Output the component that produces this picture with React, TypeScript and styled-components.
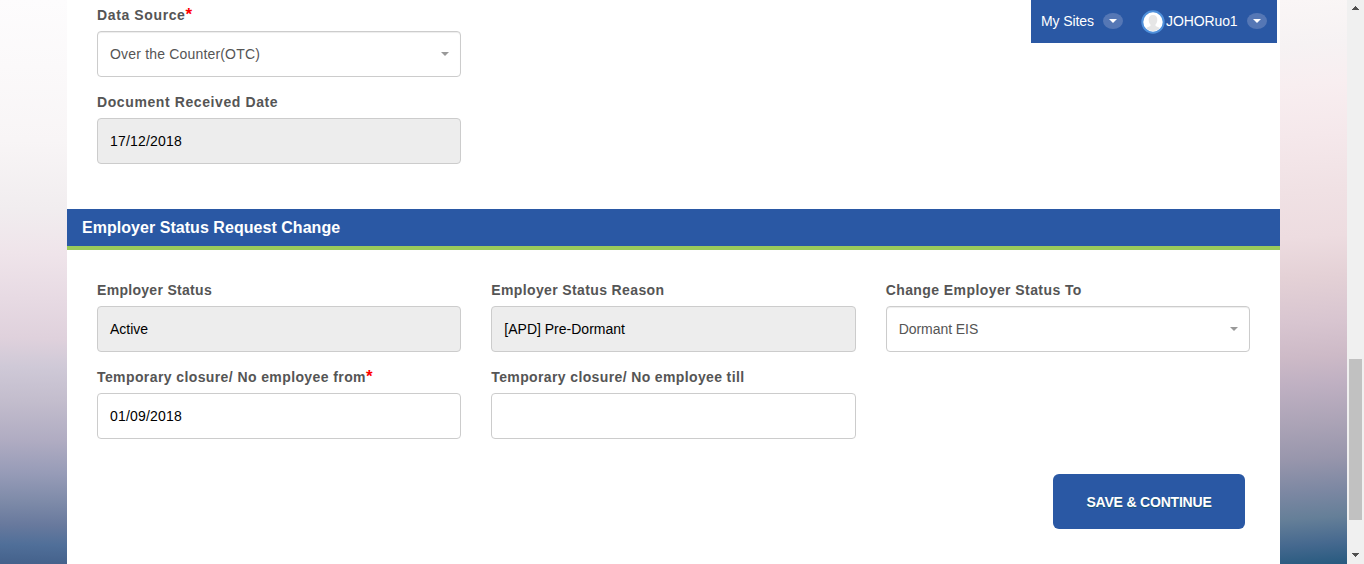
import React from 'react';
import styled, { createGlobalStyle, css } from 'styled-components';

const blue = '#2a58a4';

const GlobalStyle = createGlobalStyle`
  *, *::before, *::after { box-sizing: border-box; }
  html, body { margin: 0; padding: 0; overflow: hidden; }
  body {
    font-family: "Liberation Sans", Arial, Helvetica, sans-serif;
    font-size: 14px;
    color: #555;
    background: #fff;
  }
`;

const Page = styled.div`
  position: relative;
  display: flex;
  width: 1364px;
  height: 564px;
  overflow: hidden;
`;

const Backdrop = styled.div<{ $side: 'left' | 'right' }>`
  flex: 0 0 67px;
  ${({ $side }) =>
    $side === 'left'
      ? css`
          background: linear-gradient(181deg, #fdfcfd 0%, #fbf9fa 12%, #f8f5f6 25%, #f1edef 37%, #efe4ea 45%,
            #e7dae3 53%, #dfd1dc 60%, #cfc9d7 65%, #c3bdcd 71%, #b0acc2 78%, #969bb7 84%,
            #7d8aa8 89%, #68799d 93%, #506f99 96.5%, #44618b 100%);
        `
      : css`
          background: linear-gradient(176deg, #faf6f6 0%, #f6f2f3 8%, #f8eef0 15%, #f5e8eb 24%, #f0e1e4 34%,
            #eddce0 42%, #e4d1d6 49%, #d8c5d0 57%, #cdbac7 63%, #bfb0c2 68%, #aba3b6 75%,
            #9896ac 81%, #7b87a2 87%, #657f98 91.5%, #46698f 96%, #275a7f 100%);
        `}
`;

const Content = styled.main`
  flex: 1;
  min-width: 0;
  display: flex;
  flex-direction: column;
  background: #fff;
`;

const FieldGrid = styled.section<{ $top: number }>`
  display: grid;
  grid-template-columns: repeat(3, 1fr);
  column-gap: 30px;
  row-gap: 15px;
  padding: ${({ $top }) => $top}px 30px 0;
`;

const FieldCell = styled.div<{ $firstColumn?: boolean }>`
  ${({ $firstColumn }) => $firstColumn && 'grid-column: 1;'}
`;

const Label = styled.label<{ $spacing: number }>`
  display: block;
  height: 26px;
  line-height: 20px;
  font-weight: 700;
  letter-spacing: ${({ $spacing }) => $spacing}px;
  white-space: nowrap;
`;

const Required = styled.span`
  color: #f00;
  font-size: 17px;
  line-height: 10px;
  letter-spacing: 0;
`;

const Control = styled.div<{ $kind: Kind }>`
  display: flex;
  align-items: center;
  justify-content: space-between;
  height: 46px;
  padding: 0 11px 0 12px;
  border: 1px solid #ccc;
  border-radius: 4px;
  color: ${({ $kind }) => ($kind === 'select' ? '#555' : '#000')};
  background: ${({ $kind }) => ($kind === 'readonly' ? '#ededed' : '#fff')};
  box-shadow: ${({ $kind }) => ($kind === 'select' ? 'inset 0 1px 1px rgba(0, 0, 0, 0.075)' : 'none')};
`;

const Value = styled.span<{ $spacing: number }>`
  letter-spacing: ${({ $spacing }) => $spacing}px;
  white-space: nowrap;
`;

const Caret = styled.i`
  border: 4px solid transparent;
  border-top-color: #999;
  border-bottom: 0;
`;

const SectionHeader = styled.h2`
  height: 41px;
  margin: 45px 0 0;
  padding: 0 15px;
  border-bottom: 4px solid #9acb5b;
  background: ${blue};
  color: #fff;
  font-size: 16px;
  font-weight: 700;
  line-height: 37px;
  letter-spacing: 0.04px;
`;

const Actions = styled.div`
  display: flex;
  justify-content: flex-end;
  padding: 35px 35px 0;
`;

const SaveButton = styled.button`
  width: 192px;
  height: 55px;
  padding: 0;
  border: 0;
  border-radius: 6px;
  background: ${blue};
  color: #fff;
  font: 700 14px "Liberation Sans", Arial, sans-serif;
  letter-spacing: -0.2px;
  text-shadow: 0 1px 0 #14506b;
`;

const UserBar = styled.nav`
  position: absolute;
  top: 0;
  left: 1031px;
  display: flex;
  align-items: center;
  width: 246px;
  height: 43px;
  padding-left: 10px;
  background: ${blue};
  color: #fff;
`;

const UserText = styled.span<{ $width: number; $spacing: number }>`
  width: ${({ $width }) => $width}px;
  padding-bottom: 1px;
  letter-spacing: ${({ $spacing }) => $spacing}px;
  white-space: nowrap;
`;

const Toggle = styled.span`
  display: flex;
  align-items: center;
  justify-content: center;
  width: 20px;
  height: 16px;
  margin-bottom: 1px;
  border-radius: 50%;
  background: #5577b5;

  &::after {
    content: '';
    border: 4px solid transparent;
    border-top: 4px solid #fff;
    border-bottom: 0;
  }
`;

const Avatar = styled.svg`
  width: 24px;
  height: 24px;
  margin: 1px 1px 0 18px;
`;

const Scrollbar = styled.aside`
  flex: 0 0 17px;
  display: flex;
  flex-direction: column;
  align-items: center;
  background: #f0f0f0;
`;

const Thumb = styled.div`
  width: 13px;
  height: 161px;
  margin: 342px 0 27px;
  background: #c1c1c1;
`;

const ScrollArrow = styled.svg`
  display: block;
  width: 17px;
  height: 17px;
  fill: #505050;
`;

type Kind = 'select' | 'readonly' | 'input';

interface FieldProps {
  label: string;
  value: string;
  kind: Kind;
  required?: boolean;
  firstColumn?: boolean;
  labelSpacing?: number;
  valueSpacing?: number;
}

function Field({ label, value, kind, required, firstColumn, labelSpacing = 0.37, valueSpacing = 0 }: FieldProps) {
  return (
    <FieldCell $firstColumn={firstColumn}>
      <Label $spacing={labelSpacing}>
        {label}
        {required && <Required>*</Required>}
      </Label>
      <Control $kind={kind}>
        <Value $spacing={valueSpacing}>{value}</Value>
        {kind === 'select' && <Caret />}
      </Control>
    </FieldCell>
  );
}

export default function App() {
  return (
    <>
      <GlobalStyle />
      <Page>
        <Backdrop $side="left" />
        <Content>
          <FieldGrid $top={5}>
            <Field firstColumn label="Data Source" value="Over the Counter(OTC)" kind="select" required labelSpacing={0.62} valueSpacing={0.18} />
            <Field firstColumn label="Document Received Date" value="17/12/2018" kind="readonly" labelSpacing={0.6} valueSpacing={0.2} />
          </FieldGrid>
          <SectionHeader>Employer Status Request Change</SectionHeader>
          <FieldGrid $top={30}>
            <Field label="Employer Status" value="Active" kind="readonly" labelSpacing={0.3} />
            <Field label="Employer Status Reason" value="[APD] Pre-Dormant" kind="readonly" />
            <Field label="Change Employer Status To" value="Dormant EIS" kind="select" labelSpacing={0.42} valueSpacing={-0.05} />
            <Field label="Temporary closure/ No employee from" value="01/09/2018" kind="input" required labelSpacing={0.4} valueSpacing={0.2} />
            <Field label="Temporary closure/ No employee till" value="" kind="input" />
          </FieldGrid>
          <Actions>
            <SaveButton>SAVE &amp; CONTINUE</SaveButton>
          </Actions>
        </Content>
        <Backdrop $side="right" />
        <Scrollbar>
          <ScrollArrow viewBox="0 0 17 17">
            <path d="M5 10v-1h1V8h1V7h1V6h1v1h1v1h1v1h1v1z" />
          </ScrollArrow>
          <Thumb />
          <ScrollArrow viewBox="0 0 17 17">
            <path d="M5 6v1h1v1h1v1h1v1h1V9h1V8h1V7h1V6z" />
          </ScrollArrow>
        </Scrollbar>
        <UserBar>
          <UserText $width={62} $spacing={-0.1}>My Sites</UserText>
          <Toggle />
          <Avatar viewBox="0 0 24 24">
            <circle cx="12" cy="12" r="10.7" fill="#fff" stroke="#4f90db" strokeWidth="2" />
            <path d="M12 5c-3 0-4.500 2-4.300 5 .1 2 .8 3.500 1.800 4.500v1.500L5 18c4 4 10 4 14 0l-4.500-2v-1.500c1-1 1.700-2.500 1.800-4.500.2-3-1.300-5-4.300-5z" fill="#e6e6e6" />
          </Avatar>
          <UserText $width={81} $spacing={-0.1}>JOHORuo1</UserText>
          <Toggle />
        </UserBar>
      </Page>
    </>
  );
}
